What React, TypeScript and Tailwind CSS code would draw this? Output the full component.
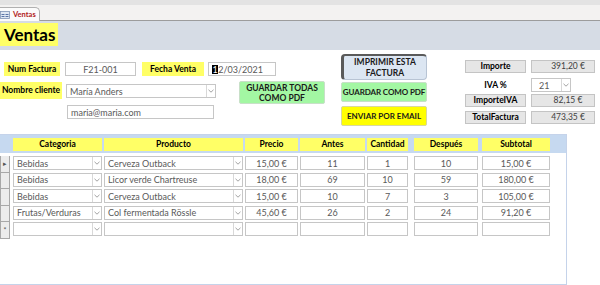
import React from "react";

const font = "font-['Lato','Open_Sans',sans-serif]";

function Label({ w, children, cls = "" }: { w: string; children: React.ReactNode; cls?: string }) {
  return (
    <div className={`${w} ${cls} bg-[#ffff66] flex items-center justify-center text-[8.5px] font-bold text-black leading-none whitespace-nowrap`}>
      {children}
    </div>
  );
}

function Box({ w, children, align = "center", cls = "" }: { w: string; children?: React.ReactNode; align?: "center" | "left" | "right"; cls?: string }) {
  const a = align === "left" ? "justify-start pl-[3px]" : align === "right" ? "justify-end pr-[5px]" : "justify-center";
  return (
    <div className={`${w} ${cls} bg-white border border-[#c6c6c6] flex items-center ${a} text-[9px] text-[#595959] leading-none overflow-hidden whitespace-nowrap`}>
      {children}
    </div>
  );
}

function Combo({ w, children, cls = "" }: { w: string; children?: React.ReactNode; cls?: string }) {
  return (
    <div className={`${w} ${cls} bg-white border border-[#c6c6c6] flex items-stretch text-[9px] text-[#595959] leading-none`}>
      <div className="flex-1 flex items-center pl-[3px] overflow-hidden whitespace-nowrap">{children}</div>
      <div className="w-[9px] border-l border-[#d8d8d8] flex items-center justify-center">
        <svg width="6" height="4" viewBox="0 0 6 4">
          <path d="M0.5 0.8 L3 3.2 L5.5 0.8" fill="none" stroke="#8a8a8a" strokeWidth="0.8" />
        </svg>
      </div>
    </div>
  );
}

const rows = [
  { cat: "Bebidas", prod: "Cerveza Outback", precio: "15,00 €", antes: "11", cant: "1", desp: "10", sub: "15,00 €" },
  { cat: "Bebidas", prod: "Licor verde Chartreuse", precio: "18,00 €", antes: "69", cant: "10", desp: "59", sub: "180,00 €" },
  { cat: "Bebidas", prod: "Cerveza Outback", precio: "15,00 €", antes: "10", cant: "7", desp: "3", sub: "105,00 €" },
  { cat: "Frutas/Verduras", prod: "Col fermentada Rössle", precio: "45,60 €", antes: "26", cant: "2", desp: "24", sub: "91,20 €" },
  { cat: "", prod: "", precio: "", antes: "", cant: "", desp: "", sub: "" },
];

function Totals() {
  const Row = ({ label, value, boxed = true, cls = "" }: { label: string; value: React.ReactNode; boxed?: boolean; cls?: string }) => (
    <div className={`flex h-[13px] gap-[5px] ${cls}`}>
      <div className={`w-[61px] flex items-center justify-center text-[8.5px] font-bold leading-none ${boxed ? "bg-[#e6e6e6] border border-[#c4c4c4]" : ""}`}>{label}</div>
      {value}
    </div>
  );
  const Val = ({ v }: { v: string }) => (
    <div className="w-[64px] bg-[#e6e6e6] border border-[#c4c4c4] flex items-center justify-center pl-[10px] text-[8.5px] text-[#404040] leading-none">{v}</div>
  );
  return (
    <div className="ml-[38px] mt-[10px] flex flex-col">
      <Row label="Importe" value={<Val v="391,20 €" />} />
      <Row label="IVA %" boxed={false} cls="mt-[5px] h-[15px]" value={<Combo w="w-[40px]" cls="h-[14px]"><span className="pl-[4px]">21</span></Combo>} />
      <Row label="ImporteIVA" cls="mt-[1px]" value={<Val v="82,15 €" />} />
      <Row label="TotalFactura" cls="mt-[4px]" value={<Val v="473,35 €" />} />
    </div>
  );
}

export default function App() {
  return (
    <div className={`w-[600px] h-[285px] bg-white overflow-hidden ${font}`}>
      {/* tab strip */}
      <div className="h-[5px] bg-[#e3e3e3]" />
      <div className="h-[16px] bg-[#f3f2f1] border-b border-[#9c9c9c] flex items-end">
        <div className="h-[14px] w-[40px] bg-[#fbfbfb] border-t border-r border-[#b0b0b0] rounded-tr-[5px] flex items-center gap-[3px] -mb-[1px]">
          <svg width="10" height="8" viewBox="0 0 10 8">
            <rect x="0.5" y="0.5" width="9" height="7" fill="#dfe7f3" stroke="#7f93b5" strokeWidth="0.8" />
            <rect x="1.5" y="3" width="3" height="1" fill="#5a74a6" />
            <rect x="5.5" y="3" width="3" height="1" fill="#5a74a6" />
            <rect x="1.5" y="5" width="3" height="1" fill="#5a74a6" />
            <rect x="5.5" y="5" width="3" height="1" fill="#5a74a6" />
          </svg>
          <span className="text-[7.5px] font-bold text-[#b22222] leading-none">Ventas</span>
        </div>
      </div>

      {/* form header */}
      <div className="h-[29px] bg-[#d6dce5] pt-[2px]">
        <div className="w-[58px] h-[23px] bg-[#ffff66] flex items-center pl-[4px] text-[17px] font-bold text-black leading-none">Ventas</div>
      </div>

      {/* form detail */}
      <div className="h-[84px] flex">
        <div className="w-[330px] pt-[12px]">
          <div className="flex h-[14px]">
            <Label w="w-[56px] ml-[4px]">Num Factura</Label>
            <Box w="w-[71px] ml-[5px]">F21-001</Box>
            <Label w="w-[62px] ml-[6px]">Fecha Venta</Label>
            <Box w="w-[68px] ml-[4px]" align="left">
              <span className="bg-black text-white px-[0.5px]">1</span>2/03/2021
            </Box>
          </div>
          <div className="flex h-[23px] mt-[5px] items-start">
            <Label w="w-[62px]" cls="h-[17px] mt-[1px]">Nombre cliente</Label>
            <Combo w="w-[150px] ml-[4px]" cls="h-[14px] mt-[3px]">María Anders</Combo>
            <div className="w-[86px] h-[23px] ml-[23px] bg-[#a3f7a3] border border-[#c8e0c8] rounded-[2px] flex items-center justify-center text-center text-[8.5px] font-bold text-[#1a1a1a] leading-[10px]">
              GUARDAR TODAS<br />COMO PDF
            </div>
          </div>
          <div className="flex h-[14px] mt-[1px]">
            <Box w="w-[147px] ml-[67px]" align="left">maria@maria.com</Box>
          </div>
        </div>

        <div className="ml-[11px] mt-[4px] w-[86px] flex flex-col">
          <div className="h-[26px] bg-[#dce6f2] border-t-[2px] border-l-[3px] border-r border-b border-t-[#5a5a5a] border-l-[#5a5a5a] border-r-[#b8c4d4] border-b-[#b8c4d4] rounded-[4px] flex items-center justify-center text-center text-[8.5px] font-bold text-[#1a1a1a] leading-[11px]">
            IMPRIMIR ESTA<br />FACTURA
          </div>
          <div className="h-[20px] mt-[2px] bg-[#a3f7a3] border border-[#c8e0c8] rounded-[2px] flex items-center justify-center text-[8px] font-bold text-[#1a1a1a] leading-none whitespace-nowrap tracking-[-0.1px]">GUARDAR COMO PDF</div>
          <div className="h-[20px] mt-[4px] bg-[#ffff00] border border-[#d8d8a0] rounded-[2px] flex items-center justify-center text-[8px] font-bold text-[#1a1a1a] leading-none whitespace-nowrap">ENVIAR POR EMAIL</div>
        </div>

        <Totals />
      </div>

      {/* subform */}
      <div className="w-[567px] h-[151px] border-t border-r border-b border-[#c5d3ea]">
        <div className="h-[18px] bg-[#c6d9f0] flex items-center">
          <div className="w-[13px]" />
          {[
            ["Categoria", "w-[89px]"],
            ["Producto", "w-[139px] ml-[2px]"],
            ["Precio", "w-[53px] ml-[2px]"],
            ["Antes", "w-[65px] ml-[2px]"],
            ["Cantidad", "w-[41px] ml-[2px]"],
            ["Después", "w-[64px] ml-[6px]"],
            ["Subtotal", "w-[68px] ml-[4px]"],
          ].map(([t, w]) => (
            <Label key={t} w={w} cls="h-[13px]">{t}</Label>
          ))}
        </div>
        <div className="flex flex-col pt-[3px]">
          {rows.map((r, i) => (
            <div key={i} className="flex h-[16.6px] items-start">
              <div className="w-[10px] h-full bg-[#ececec] border border-[#a8a8a8] border-t-0 flex items-center justify-center text-[7px] text-[#555] leading-none">
                {i === 0 ? "▸" : i === 4 ? "*" : ""}
              </div>
              <Combo w="w-[89px] ml-[3px]" cls="h-[14px]">{r.cat}</Combo>
              <Combo w="w-[139px] ml-[2px]" cls="h-[14px]">{r.prod}</Combo>
              <Box w="w-[53px] ml-[2px]" cls="h-[14px]">{r.precio}</Box>
              <Box w="w-[65px] ml-[2px]" cls="h-[14px]">{r.antes}</Box>
              <Box w="w-[41px] ml-[2px]" cls="h-[14px]">{r.cant}</Box>
              <Box w="w-[64px] ml-[6px]" cls="h-[14px]">{r.desp}</Box>
              <Box w="w-[68px] ml-[4px]" cls="h-[14px]">{r.sub}</Box>
            </div>
          ))}
        </div>
      </div>
    </div>
  );
}
